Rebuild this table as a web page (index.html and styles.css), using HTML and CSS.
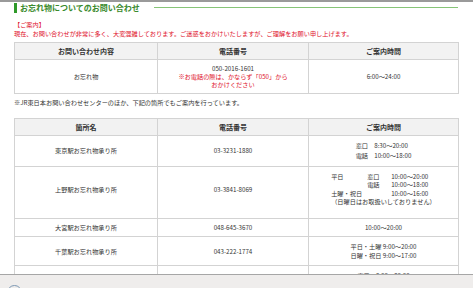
FILE: index.html
```html
<!DOCTYPE html>
<html lang="ja">
<head>
<meta charset="utf-8">
<title>お忘れ物についてのお問い合わせ</title>
<link rel="stylesheet" href="styles.css">
</head>
<body>
<div class="topline"></div>
<main class="page">
  <h2 class="ttl"><span class="ttl-text">お忘れ物についてのお問い合わせ</span><span class="ttl-rule"></span></h2>
  <p class="notice-head">【ご案内】</p>
  <p class="notice">現在、お問い合わせが非常に多く、大変混雑しております。ご迷惑をおかけいたしますが、ご理解をお願い申し上げます。</p>

  <table class="tbl tbl-first">
    <colgroup><col class="c1"><col class="c2"><col class="c3"></colgroup>
    <thead>
      <tr><th>お問い合わせ内容</th><th>電話番号</th><th>ご案内時間</th></tr>
    </thead>
    <tbody>
      <tr class="r-main">
        <td>お忘れ物</td>
        <td>050-2016-1601<br><span class="red">※お電話の際は、かならず「050」から<br>おかけください</span></td>
        <td>6:00～24:00</td>
      </tr>
    </tbody>
  </table>

  <p class="note">※JR東日本お問い合わせセンターのほか、下記の箇所でもご案内を行っています。</p>

  <table class="tbl tbl-second">
    <colgroup><col class="c1"><col class="c2"><col class="c3"></colgroup>
    <thead>
      <tr><th>箇所名</th><th>電話番号</th><th>ご案内時間</th></tr>
    </thead>
    <tbody>
      <tr class="r-tokyo">
        <td>東京駅お忘れ物承り所</td>
        <td>03-3231-1880</td>
        <td><div class="hours"><div>窓口　8:30～20:00</div><div>電話　10:00～18:00</div></div></td>
      </tr>
      <tr class="r-ueno">
        <td>上野駅お忘れ物承り所</td>
        <td>03-3841-8069</td>
        <td>
          <div class="ueno">
            <span>平日</span><span>窓口</span><span>10:00～20:00</span>
            <span></span><span>電話</span><span>10:00～18:00</span>
            <span class="span2">土曜・祝日</span><span>10:00～16:00</span>
            <span class="span3">（日曜日はお取扱いしておりません）</span>
          </div>
        </td>
      </tr>
      <tr class="r-omiya">
        <td>大宮駅お忘れ物承り所</td>
        <td>048-645-3670</td>
        <td>10:00～20:00</td>
      </tr>
      <tr class="r-chiba">
        <td>千葉駅お忘れ物承り所</td>
        <td>043-222-1774</td>
        <td><div class="hours"><div>平日・土曜 9:00～20:00</div><div>日曜・祝日 9:00～17:00</div></div></td>
      </tr>
      <tr class="r-next">
        <td>横浜駅お忘れ物承り所</td>
        <td>045-453-7700</td>
        <td><div class="hours"><div>窓口　9:00～20:00</div><div>電話　9:00～18:00</div></div></td>
      </tr>
    </tbody>
  </table>
</main>
<div class="statusbar"><span class="status-icon"></span></div>
</body>
</html>
```

FILE: styles.css
```css
* { box-sizing: border-box; }
html, body { margin: 0; padding: 0; background: #fff; }
body {
  font-family: "Noto Sans CJK JP", "Noto Sans", sans-serif;
  font-size: 6.2px;
  color: #333;
  overflow: hidden;
}
.topline {
  height: 2px;
  background: #9a9a9a;
}
.page {
  padding: 0 15px 40px 14px;
}
.ttl {
  display: flex;
  align-items: center;
  margin: 1px 0 0 0;
  height: 10px;
  border-left: 3px solid #2f9a2a;
  padding-left: 3px;
  font-size: 8px;
  line-height: 10px;
  font-weight: bold;
  color: #3a8a2c;
}
.ttl-text { white-space: nowrap; }
.ttl-rule {
  flex: 1;
  height: 1px;
  background: #86c477;
  margin-left: 14px;
  align-self: flex-start;
  margin-top: 4px;
}
.notice-head, .notice {
  margin: 0;
  color: #e0102a;
  line-height: 9px;
}
.notice-head { margin-top: 6.5px; }
.notice { margin-bottom: 4.5px; white-space: nowrap; }
.red { color: #e0102a; }

.tbl {
  width: 444px;
  border-collapse: collapse;
  table-layout: fixed;
}
.tbl .c1 { width: 143px; }
.tbl .c2 { width: 151px; }
.tbl .c3 { width: 150px; }
.tbl th, .tbl td {
  border: 1px solid #d3d3d3;
  text-align: center;
  vertical-align: middle;
  padding: 4px 2px;
  line-height: 8px;
  white-space: nowrap;
}
.tbl th {
  background: #f2f2f2;
  font-size: 7px;
  font-weight: bold;
  color: #333;
}
.r-main td { padding: 4.5px 2px; }
.note {
  margin: 3.5px 0 11.5px 0;
  line-height: 9px;
  white-space: nowrap;
}
.hours {
  display: inline-block;
  text-align: left;
}
.r-tokyo td { padding: 5px 2px; line-height: 10px; }
.r-ueno td { padding: 5.75px 2px 11.25px; line-height: 8.5px; }
.r-omiya td { padding: 4.5px 2px; }
.r-chiba td { padding: 5px 2px; line-height: 9px; }
.r-next td { padding: 5px 2px; line-height: 9px; }
.ueno {
  display: inline-grid;
  grid-template-columns: 36px 24px auto;
  text-align: left;
}
.ueno .span2 { grid-column: span 2; }
.ueno .span3 { grid-column: span 3; }

.statusbar {
  position: fixed;
  left: 0;
  right: 0;
  bottom: 0;
  height: 14px;
  background: #efedec;
  border-top: 1px solid #a6a6a6;
  overflow: hidden;
}
.status-icon {
  position: absolute;
  left: 7px;
  top: 10px;
  width: 15px;
  height: 15px;
  border: 1px solid #7d98b3;
  border-radius: 50%;
}
```
